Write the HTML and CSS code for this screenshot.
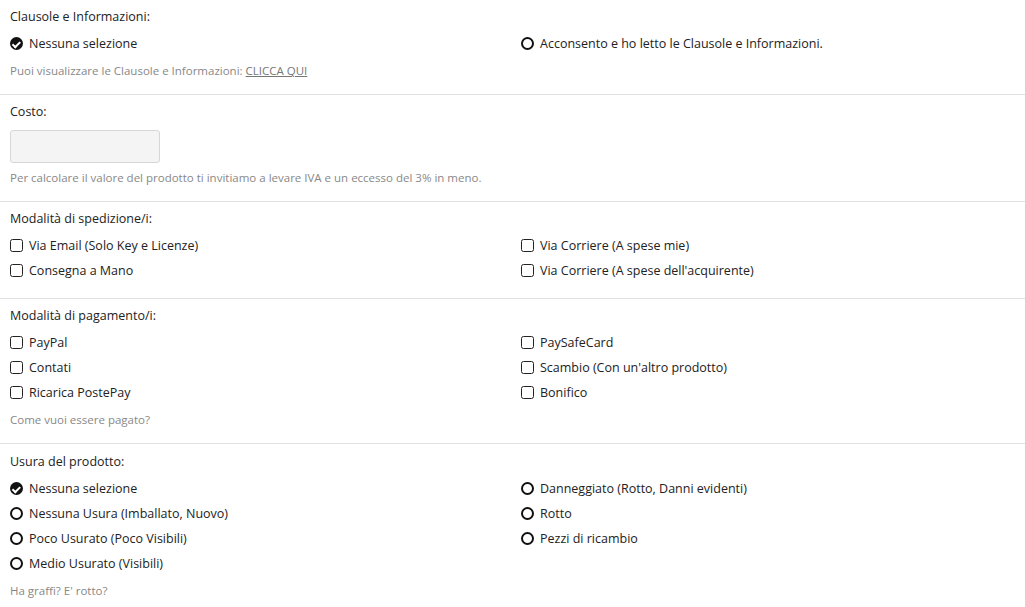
FILE: index.html
```html
<!DOCTYPE html>
<html>
<head>
<meta charset="utf-8">
<title>Inserisci prodotto</title>
<link rel="stylesheet" href="styles.css">
</head>
<body>

<div class="section">
	<div class="label">Clausole e Informazioni:</div>
	<div class="opts">
		<div class="opt"><span class="ico radio on"></span>Nessuna selezione</div>
		<div class="opt"><span class="ico radio"></span>Acconsento e ho letto le Clausole e Informazioni.</div>
	</div>
	<div class="help">Puoi visualizzare le Clausole e Informazioni: <a href="#">CLICCA QUI</a></div>
</div>

<div class="section">
	<div class="label">Costo:</div>
	<input type="text" class="field">
	<div class="help">Per calcolare il valore del prodotto ti invitiamo a levare IVA e un eccesso del 3% in meno.</div>
</div>

<div class="section nohelp">
	<div class="label">Modalità di spedizione/i:</div>
	<div class="opts">
		<div class="opt"><span class="ico box"></span>Via Email (Solo Key e Licenze)</div>
		<div class="opt"><span class="ico box"></span>Via Corriere (A spese mie)</div>
		<div class="opt"><span class="ico box"></span>Consegna a Mano</div>
		<div class="opt"><span class="ico box"></span>Via Corriere (A spese dell'acquirente)</div>
	</div>
</div>

<div class="section">
	<div class="label">Modalità di pagamento/i:</div>
	<div class="opts">
		<div class="opt"><span class="ico box"></span>PayPal</div>
		<div class="opt"><span class="ico box"></span>PaySafeCard</div>
		<div class="opt"><span class="ico box"></span>Contati</div>
		<div class="opt"><span class="ico box"></span>Scambio (Con un'altro prodotto)</div>
		<div class="opt"><span class="ico box"></span>Ricarica PostePay</div>
		<div class="opt"><span class="ico box"></span>Bonifico</div>
	</div>
	<div class="help">Come vuoi essere pagato?</div>
</div>

<div class="section last">
	<div class="label">Usura del prodotto:</div>
	<div class="opts">
		<div class="opt"><span class="ico radio on"></span>Nessuna selezione</div>
		<div class="opt"><span class="ico radio"></span>Danneggiato (Rotto, Danni evidenti)</div>
		<div class="opt"><span class="ico radio"></span>Nessuna Usura (Imballato, Nuovo)</div>
		<div class="opt"><span class="ico radio"></span>Rotto</div>
		<div class="opt"><span class="ico radio"></span>Poco Usurato (Poco Visibili)</div>
		<div class="opt"><span class="ico radio"></span>Pezzi di ricambio</div>
		<div class="opt"><span class="ico radio"></span>Medio Usurato (Visibili)</div>
	</div>
	<div class="help">Ha graffi? E' rotto?</div>
</div>

</body>
</html>
```

FILE: styles.css
```css
body {
	margin: 0;
	background: #fff;
	font-family: "Open Sans", "Noto Sans", sans-serif;
	font-size: 12.5px;
	color: #222;
}
.section {
	padding: 8px 10px 14px 10px;
	border-bottom: 1px solid #e2e2e2;
}
.section.nohelp {
	padding-bottom: 15px;
}
.section.last {
	border-bottom: none;
	padding-top: 9px;
}
.label {
	line-height: 18px;
	margin-bottom: 5px;
}
.opts {
	display: grid;
	grid-template-columns: 511px 1fr;
}
.opt {
	display: flex;
	align-items: center;
	height: 25px;
	white-space: nowrap;
}
.ico {
	flex: none;
	width: 13px;
	height: 13px;
	margin-right: 6px;
	box-sizing: border-box;
}
.radio {
	border: 2px solid #111;
	border-radius: 50%;
}
.radio.on {
	border: none;
	background: #111;
	position: relative;
}
.radio.on:after {
	content: "";
	position: absolute;
	left: 4px;
	top: 2.5px;
	width: 3px;
	height: 5.5px;
	border: solid #fff;
	border-width: 0 2px 2px 0;
	transform: rotate(45deg);
}
.box {
	border: 1.5px solid #222;
	border-radius: 2.5px;
}
.field {
	display: block;
	margin: 9px 0 0 0;
	width: 150px;
	height: 33px;
	box-sizing: border-box;
	background: #f4f4f4;
	border: 1px solid #d6d6d6;
	border-radius: 3px;
}
.help {
	margin-top: 6px;
	line-height: 18px;
	font-size: 11.5px;
	color: #888;
}
.help a {
	color: #777;
}
```
